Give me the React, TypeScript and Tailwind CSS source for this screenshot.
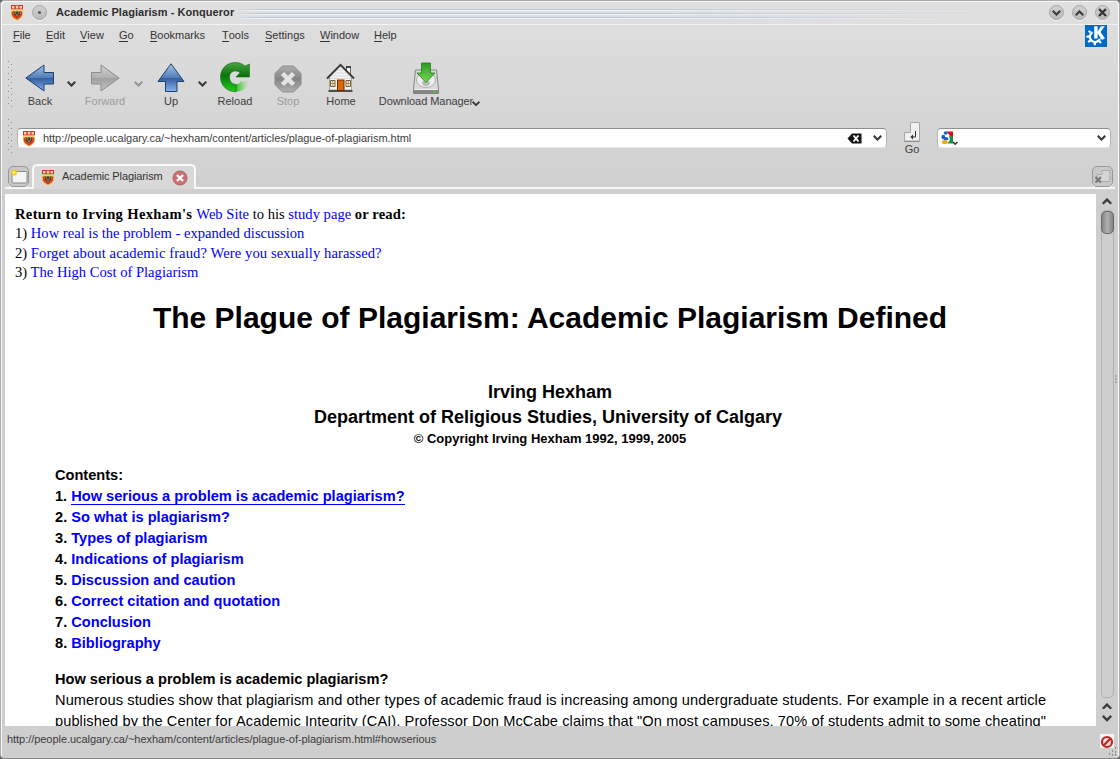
import React from "react";

function Crest({ className = "" }: { className?: string }) {
  return (
    <svg className={"shrink-0 " + className} width="14" height="17" viewBox="0 0 14 17">
      <path d="M1 1h12v8c0 4-2.500 6-6 7.500C3.500 15 1 13 1 9z" fill="#f3b93a" />
      <path d="M1 1h12v4.500H1z" fill="#cc2f30" />
      <path d="M2 2h2.500v2.500H2zM5.800 1.800h2.500v2.700H5.800zM9.500 2H12v2.500H9.500z" fill="#f5d69a" />
      <path d="M1 5.500h12v1.200H1z" fill="#efd9a0" />
      <path d="M1.800 7.500v2c0 2.800 2.200 4.600 5.200 5.900 3-1.300 5.200-3.100 5.200-5.900v-2l-1.300.5v1.500L7 13.500 3.100 9.500V8z" fill="#d8392b" />
      <path d="M3.300 7l1.900.8L7 7.200l1.800.6 1.900-.8-.5 3.500L7 13.200 3.800 10.500z" fill="#4a3d30" />
      <path d="M4.800 8.800l1.200.7M9.200 8.800L8 9.500M7 10v2" stroke="#e0b860" strokeWidth=".9" />
    </svg>
  );
}

function Chevron({ up, color = "#3b3b3b", className = "", size = 9 }: { up?: boolean; color?: string; className?: string; size?: number }) {
  return (
    <svg className={"shrink-0 " + className} width={size} height={(size * 6) / 9} viewBox="0 0 9 6">
      <path d={up ? "M.7 5.200L4.500 1.400 8.300 5.200" : "M.7.8L4.500 4.600 8.300.8"} fill="none" stroke={color} strokeWidth="2.100" />
    </svg>
  );
}

function WindowButton({ children, className = "" }: { children: React.ReactNode; className?: string }) {
  return (
    <span className={"flex size-[15px] shrink-0 items-center justify-center rounded-full border border-[#a5a5a5] bg-linear-to-b from-[#d2d2d2] to-[#bababa] shadow-[0_1px_0_#f5f5f5] " + className}>
      {children}
    </span>
  );
}

function Grip({ rows }: { rows: number }) {
  return (
    <svg width="5" height={rows * 6} className="shrink-0">
      {Array.from({ length: rows }, (_, i) => (
        <g key={i}>
          <rect x="0" y={i * 6} width="1" height="1" fill="#8f8f8f" />
          <rect x="3" y={i * 6 + 3} width="1" height="1" fill="#8f8f8f" />
        </g>
      ))}
    </svg>
  );
}

function ArrowIcon({ kind }: { kind: "back" | "forward" | "up" }) {
  const gray = kind === "forward";
  const id = "arrow-" + kind;
  return (
    <svg width="30" height="30" viewBox="0 0 30 30">
      <defs>
        <linearGradient id={id} gradientUnits="userSpaceOnUse" x1="15" y1="2" x2="15" y2="28">
          <stop offset="0" stopColor={gray ? "#d0d0d0" : "#a3c0e4"} />
          <stop offset=".5" stopColor={gray ? "#b0b0b0" : "#4f7cb8"} />
          <stop offset=".52" stopColor={gray ? "#a0a0a0" : "#355f9d"} />
          <stop offset="1" stopColor={gray ? "#c6c6c6" : "#83b0ee"} />
        </linearGradient>
      </defs>
      <g stroke={gray ? "#8c8c8c" : "#1d3f70"} strokeWidth="1" strokeLinejoin="round" fill={"url(#" + id + ")"}>
        {kind === "up" && <path d="M15 .8L28 18.500h-7V28.500H9.500V18.500H2z" />}
        {kind === "back" && <path d="M.8 15L19 2v7.500h9.500v11.500h-9.500v7z" />}
        {kind === "forward" && <path d="M29.200 15L11 2v7.500H1.500v11.500h9.500v7z" />}
      </g>
    </svg>
  );
}

function ReloadIcon() {
  return (
    <svg width="32" height="32" viewBox="0 0 32 32">
      <defs>
        <linearGradient id="reload" x1="0" y1="0" x2="0" y2="1">
          <stop offset="0" stopColor="#4ba33f" />
          <stop offset=".45" stopColor="#0b730b" />
          <stop offset="1" stopColor="#20d018" />
        </linearGradient>
        <linearGradient id="reload-tail" x1="0" y1="0" x2="1" y2="0">
          <stop offset=".1" stopColor="#28c51f" />
          <stop offset="1" stopColor="#c9dcc6" stopOpacity=".3" />
        </linearGradient>
      </defs>
      <path d="M16 30.800c7.500 0 13-4 14.300-10.300h-8.800c-1 2-2.500 3-5.500 3z" fill="url(#reload-tail)" />
      <path d="M17 30.800C8 30.800 1.500 24.500 1.500 16S8 1.500 16.500 1.500c4 0 7 1.200 9.300 3.500L30.500 3V16H17l4-4.200c-1.300-1.300-2.800-1.800-4.500-1.800-3.800 0-6 2.500-6 6.200 0 4 2.500 7 6.500 7.300z" fill="url(#reload)" stroke="#176a17" strokeWidth=".6" />
    </svg>
  );
}

function StopIcon() {
  return (
    <svg width="28" height="28" viewBox="0 0 28 28">
      <defs>
        <linearGradient id="stop" x1="0" y1="0" x2="0" y2="1">
          <stop offset="0" stopColor="#adadad" />
          <stop offset=".5" stopColor="#858585" />
          <stop offset="1" stopColor="#b0b0b0" />
        </linearGradient>
      </defs>
      <path d="M8.500 1h11L27 8.500v11L19.500 27h-11L1 19.500v-11z" fill="url(#stop)" stroke="#8a8a8a" />
      <path d="M8.500 8.500l11 11M19.500 8.500l-11 11" stroke="#e4e4e4" strokeWidth="4.500" />
    </svg>
  );
}

function HomeIcon() {
  return (
    <svg width="30" height="30" viewBox="0 0 30 30">
      <path d="M20.500 4h4v9h-4z" fill="#fff" stroke="#444" strokeWidth=".8" />
      <path d="M20 4h5" stroke="#222" strokeWidth="1.500" />
      <path d="M3.500 14L14.500 3l11 11v13h-22z" fill="#f5f5f5" stroke="#888" strokeWidth=".7" />
      <path d="M4 15.500h21M6 13h17M9 10h11M12 7h5" stroke="#cfcfcf" strokeWidth=".8" />
      <path d="M1 15.500L14.500 1.800 28 15.500" fill="none" stroke="#3a3a3a" strokeWidth="1.800" />
      <path d="M2.500 28h24" stroke="#505050" strokeWidth="2" />
      <rect x="11.500" y="17" width="6.500" height="10.500" fill="#d9690a" stroke="#6b2e05" />
      <path d="M4.500 17.500H9v6H4.500zM20 17.500h4.500v6H20z" fill="#f4eed2" stroke="#6d501d" strokeWidth=".9" />
      <path d="M4.500 20.500H9M20 20.500h4.500M6.800 17.500v6M22.300 17.500v6" stroke="#6d501d" strokeWidth=".5" />
    </svg>
  );
}

function DownloadIcon() {
  return (
    <svg width="28" height="33" viewBox="0 0 28 33" className="translate-y-[2px]">
      <defs>
        <linearGradient id="down" x1="0" y1="0" x2="0" y2="1">
          <stop offset="0" stopColor="#2d9a23" />
          <stop offset="1" stopColor="#77d957" />
        </linearGradient>
      </defs>
      <path d="M3.500 8h21l2 19v4.500h-25V27z" fill="#d9d9d9" stroke="#858585" />
      <path d="M2 27.500h24v4H2z" fill="#858585" />
      <path d="M2 27.500h24" stroke="#f3f3f3" />
      <ellipse cx="14" cy="18" rx="9.500" ry="7.500" fill="#ededed" stroke="#b0b0b0" />
      <ellipse cx="14" cy="21" rx="3.500" ry="2.500" fill="#bbb" stroke="#999" strokeWidth=".5" />
      <path d="M21 29.500h3" stroke="#56ce2a" strokeWidth="1.500" />
      <path d="M9.500 1h9v10H23L14 20.500 5 11h4.500z" fill="url(#down)" stroke="#237f1a" strokeWidth=".8" strokeLinejoin="round" />
    </svg>
  );
}

function KdeLogo() {
  return (
    <svg width="22" height="22" viewBox="0 0 22 22" className="shrink-0">
      <rect width="22" height="22" fill="#0068c6" />
      <path d="M7.500 7.300A5.200 5.200 0 1 0 14.800 14" fill="none" stroke="#fff" strokeWidth="2.200" />
      <path d="M5.500 7.500L3.700 5.700M4.300 11.700H1.300M5.400 15.300l-2.200 1.900M9.800 17v3.300M14 15.800l2 2.300M15.500 13l3 .8" stroke="#fff" strokeWidth="2.200" />
      <path d="M8.300 1v13h4.700V1z" fill="#0068c6" />
      <path d="M9.200 1.300h3.400v5.200l3.300-5.200h3.900l-4.300 5.800 4.600 6.500h-4l-3.500-5.200v5.200H9.200z" fill="#fff" />
    </svg>
  );
}

function Tool({ label, dim, className, children }: { label: string; dim?: boolean; className: string; children: React.ReactNode }) {
  return (
    <div className={"flex h-[52px] shrink-0 flex-col items-center " + className}>
      <div className="flex h-[38px] items-end justify-center pb-px">{children}</div>
      <div className={"text-[11px] leading-[14px] whitespace-nowrap " + (dim ? "text-[#9c9c9c]" : "text-[#3d3d3d]")}>{label}</div>
    </div>
  );
}

const menus = [
  { label: "File", width: "w-[33px]" },
  { label: "Edit", width: "w-[34px]" },
  { label: "View", width: "w-[39px]" },
  { label: "Go", width: "w-[31px]" },
  { label: "Bookmarks", width: "w-[72px]" },
  { label: "Tools", width: "w-[43px]" },
  { label: "Settings", width: "w-[55px]" },
  { label: "Window", width: "w-[54px]" },
  { label: "Help", width: "w-[40px]" },
];

const contents = [
  "So what is plagiarism?",
  "Types of plagiarism",
  "Indications of plagiarism",
  "Discussion and caution",
  "Correct citation and quotation",
  "Conclusion",
  "Bibliography",
];

function TitleBar() {
  return (
    <div className="flex h-[24px] items-center pt-px pr-[10px] pl-[10px]">
      <Crest />
      <WindowButton className="ml-2">
        <span className="size-[3px] rounded-full bg-[#555]" />
      </WindowButton>
      <div className="ml-[9px] w-[180px] text-[11px] font-bold tracking-[0.050px] whitespace-nowrap text-[#2e2e2e]">Academic Plagiarism - Konqueror</div>
      <div className="mt-[3px] mr-[38px] flex h-[11px] flex-1 flex-col gap-[2px] mask-r-from-50% mask-l-from-97%">
        <div className="h-[2px] border-t border-[#b3c8de] bg-[#f3f3f3]" />
        <div className="h-[2px] border-t border-[#b3c8de] bg-[#f3f3f3]" />
        <div className="h-[2px] border-t border-[#b3c8de] bg-[#f3f3f3]" />
      </div>
      <div className="flex gap-2">
        <WindowButton><Chevron /></WindowButton>
        <WindowButton><Chevron up /></WindowButton>
        <WindowButton>
          <svg width="9" height="9" viewBox="0 0 9 9"><path d="M1 1l7 7M8 1L1 8" stroke="#333" strokeWidth="2.300" /></svg>
        </WindowButton>
      </div>
    </div>
  );
}

function Toolbar() {
  return (
    <div className="flex h-[70px] items-start pt-[10px] pl-2">
      <div className="pt-[5px]"><Grip rows={8} /></div>
      <Tool label="Back" className="ml-[7px] w-[40px]"><ArrowIcon kind="back" /></Tool>
      <Chevron className="mt-[25px] ml-[7px]" />
      <Tool label="Forward" dim className="ml-[4px] w-[50px]"><ArrowIcon kind="forward" /></Tool>
      <Chevron className="mt-[25px] ml-[4px]" color="#949494" />
      <Tool label="Up" className="ml-[8px] w-[40px]"><ArrowIcon kind="up" /></Tool>
      <Chevron className="mt-[25px] ml-[7px]" />
      <Tool label="Reload" className="ml-[8px] w-[40px]"><ReloadIcon /></Tool>
      <Tool label="Stop" dim className="ml-[13px] w-[40px]"><StopIcon /></Tool>
      <Tool label="Home" className="ml-[13px] w-[40px]"><HomeIcon /></Tool>
      <Tool label="Download Manager" className="ml-[15px] w-[100px] tracking-[-0.060px]"><DownloadIcon /></Tool>
      <Chevron className="mt-[45px] -ml-[4px]" size={8} />
    </div>
  );
}

const field = "flex h-[20px] items-center rounded-[4px] border border-t-[#8f8f8f] border-x-[#b5b5b5] border-b-[#e8e8e8] bg-white";

function LocationBar() {
  return (
    <div className="flex h-[44px] items-start pl-2">
      <div className="pt-[3px]"><Grip rows={6} /></div>
      <div className={field + " mt-[12px] ml-1 w-[870px] pl-[4px]"}>
        <Crest />
        <span className="-mt-px ml-[7px] w-[804px] text-[11px] leading-4 tracking-[-0.040px] whitespace-nowrap text-[#3d3d3d]">http://people.ucalgary.ca/~hexham/content/articles/plague-of-plagiarism.html</span>
        <svg width="15" height="11" viewBox="0 0 15 11" className="shrink-0">
          <path d="M.5 5.500L5 .5h9.500v10H5z" fill="#151515" />
          <path d="M6.500 2.500l5 6M11.500 2.500l-5 6" stroke="#fff" strokeWidth="1.900" />
        </svg>
        <Chevron className="ml-[11px]" />
      </div>
      <div className="ml-[13px] flex w-6 flex-col items-center pt-[6px]">
        <svg width="16" height="20" viewBox="0 0 16 20">
          <path d="M6.500.5h9v18.500H.5v-8.500h6z" fill="#f1f1f1" stroke="#a7a7a7" />
          <path d="M.5 19.500h15" stroke="#8d8d8d" />
          <path d="M11.500 9v6H8" fill="none" stroke="#333" />
          <path d="M9 12.500v5L6.300 15z" fill="#333" />
        </svg>
        <span className="text-[11px] leading-[14px] text-[#3d3d3d]">Go</span>
      </div>
      <div className={field + " mt-[12px] ml-[13px] w-[174px] pl-[3px]"}>
        <svg width="17" height="16" viewBox="0 0 17 16" className="shrink-0">
          <path d="M5.500 1.500H12v6L9 6z" fill="#e00b18" />
          <path d="M8 5.500l4 1.500v6.500H6.500L9 10z" fill="#119347" />
          <ellipse cx="2.300" cy="7" rx="1.900" ry="2.300" fill="#1c5fc4" />
          <ellipse cx="4.700" cy="3" rx="2" ry="1.700" fill="#1c5fc4" />
          <ellipse cx="5" cy="8.700" rx="2.500" ry="1.600" fill="#1c5fc4" />
          <ellipse cx="3.800" cy="12" rx="3" ry="2" fill="#f0a818" />
          <path d="M12 12l2.200 2.200L16.400 12" fill="none" stroke="#333" strokeWidth="1.600" />
        </svg>
        <Chevron className="mr-[4px] ml-auto" />
      </div>
    </div>
  );
}

const tabButton = "flex size-[21px] items-center justify-center rounded-[5px] border border-[#979797] bg-[#c9c9c9] shadow-[0_1px_0_#f4f4f4]";

function TabBar() {
  return (
    <div className="mx-[5px] flex h-[29px] items-end">
      <div className="h-[24px] border-b-2 border-[#f8f8f8] px-[3px] pt-px">
        <div className={tabButton}>
          <svg width="18" height="15" viewBox="0 0 18 15">
            <rect x="2" y="2.500" width="15" height="11.500" rx="1" fill="#f5f5f5" stroke="#8a8a8a" />
            <circle cx="4" cy="3.500" r="3" fill="#f4c81c" />
            <circle cx="4" cy="3.500" r="1.300" fill="#fff3a0" />
          </svg>
        </div>
      </div>
      <div className="flex h-[25px] w-[164px] items-center rounded-t-[5px] border-x-2 border-t-2 border-[#f8f8f8] bg-[#d8d8d8] pl-[7px]">
        <Crest className="-mt-px" />
        <span className="-mt-[3px] ml-[7px] w-[110px] text-[11px] leading-4 tracking-[-0.110px] whitespace-nowrap text-[#333]">Academic Plagiarism</span>
        <svg width="16" height="16" viewBox="0 0 16 16" className="shrink-0">
          <circle cx="8" cy="8" r="7" fill="#cf7070" stroke="#a96161" />
          <path d="M5 5l6 6M11 5l-6 6" stroke="#fff" strokeWidth="2.400" />
        </svg>
      </div>
      <div className="flex h-[24px] flex-1 justify-end border-b-2 border-[#f8f8f8] pt-px pr-[2px]">
        <div className={tabButton}>
          <svg width="17" height="15" viewBox="0 0 17 15">
            <path d="M8 1.500h8v11H3v-7h5z" fill="#d6d6d6" stroke="#aaa" />
            <path d="M1.500 8l5.500 5.500M7 8l-5.500 5.500" stroke="#777" strokeWidth="2.200" />
          </svg>
        </div>
      </div>
    </div>
  );
}

function Article() {
  return (
    <main className="w-[1091px] overflow-hidden bg-white px-[10px] pt-[11px] text-black">
      <div className="font-['Liberation_Serif',serif] text-[14.6px] leading-[19.3px] whitespace-nowrap">
        <div><b className="tracking-[0.330px]">Return to Irving Hexham's </b><a className="text-[#0000ff]">Web Site</a> to his <a className="text-[#0000ff]">study page</a> <b className="tracking-[0.120px]">or read:</b></div>
        <div>1) <a className="text-[#0000ff]">How real is the problem - expanded discussion</a></div>
        <div>2) <a className="tracking-[0.095px] text-[#0000ff]">Forget about academic fraud? Were you sexually harassed?</a></div>
        <div>3) <a className="text-[#0000ff]">The High Cost of Plagiarism</a></div>
      </div>
      <h1 className="mt-[16px] pr-px text-center text-[30px] leading-[40px] font-bold whitespace-nowrap">The Plague of Plagiarism: Academic Plagiarism Defined</h1>
      <div className="mt-[42px] pr-px text-center font-bold whitespace-nowrap">
        <div className="text-[18px] leading-[25px]">Irving Hexham</div>
        <div className="pr-1 text-[18px] leading-[25px]">Department of Religious Studies, University of Calgary</div>
        <div className="text-[13px] leading-[18px]">© Copyright Irving Hexham 1992, 1999, 2005</div>
      </div>
      <div className="mt-[17px] pl-10 text-[14.6px] leading-[21px] font-bold whitespace-nowrap">
        <div>Contents:</div>
        <div>1. <a className="border-b border-[#0000ff] text-[#0000ff]">How serious a problem is academic plagiarism?</a></div>
        {contents.map((text, i) => (
          <div key={text}>{i + 2}. <a className="tracking-[0.020px] text-[#0000ff]">{text}</a></div>
        ))}
      </div>
      <div className="mt-[15px] pl-10 text-[14.6px] leading-[21px] whitespace-nowrap">
        <b>How serious a problem is academic plagiarism?</b>
        <div className="tracking-[0.104px]">Numerous studies show that plagiarism and other types of academic fraud is increasing among undergraduate students. For example in a recent article</div>
        <div className="tracking-[0.090px]">published by the Center for Academic Integrity (CAI), Professor Don McCabe claims that "On most campuses, 70% of students admit to some cheating"</div>
      </div>
    </main>
  );
}

function ScrollBar() {
  return (
    <div className="flex flex-1 flex-col items-center pt-[4px] pb-[4px] pl-[2px]">
      <Chevron up size={10} />
      <div className="mt-[5px] flex w-[13px] flex-1 flex-col rounded-[5px] border border-[#b2b2b2] bg-[#cecece]">
        <div className="-mx-px h-[23px] rounded-[5px] border border-[#686868] bg-linear-to-r from-[#858585] via-[#b0b0b0] to-[#858585]" />
      </div>
      <Chevron up size={10} className="mt-[5px]" />
      <Chevron size={10} className="mt-[6px]" />
    </div>
  );
}

export default function App() {
  return (
    <div className="h-[759px] w-[1120px] overflow-hidden bg-[#666] font-['Liberation_Sans',Arial,sans-serif]">
      <div className="relative flex h-[759px] flex-col overflow-hidden rounded-[5px] bg-linear-to-b from-[#e0e0e0] to-[#cecece] to-[210px]">
        <TitleBar />
        <div className="flex h-[22px] shrink-0 justify-between border-t border-[#f3f3f3] pr-[13px] pl-[13px]">
          <nav className="flex pt-[2px] text-[11px] leading-4 text-[#333]">
            {menus.map((m) => (
              <span key={m.label} className={m.width}>
                <span className="inline-block h-[15px] border-b border-[#333]">{m.label[0]}</span>{m.label.slice(1)}
              </span>
            ))}
          </nav>
          <KdeLogo />
        </div>
        <Toolbar />
        <LocationBar />
        <TabBar />
        <div className="flex h-[537px] pt-[5px] pr-[4px] pl-[5px]">
          <Article />
          <ScrollBar />
        </div>
        <footer className="flex h-[33px] items-center justify-between pr-[6px] pb-[6px] pl-[7px] text-[11px] text-[#3b3b3b]">
          <span className="tracking-[-0.045px]">http://people.ucalgary.ca/~hexham/content/articles/plague-of-plagiarism.html#howserious</span>
          <svg width="14" height="16" viewBox="0 0 14 16" className="mt-[3px]">
            <rect width="14" height="14" y="1" fill="#f4f4f4" />
            <circle cx="7" cy="9" r="5" fill="#f3dddd" stroke="#bd2723" strokeWidth="2.200" />
            <path d="M3.500 12.500l7-7" stroke="#bd2723" strokeWidth="2.200" />
          </svg>
        </footer>
        <div className="pointer-events-none absolute inset-0 rounded-[5px] border border-[#ababab] border-b-[#858585] shadow-[inset_1px_1px_0_#fafafa,inset_-1px_0_0_#fafafa]" />
        <svg className="absolute top-[375px] left-[1115px]" width="2" height="8">
          <path d="M0 1h2M0 4h2M0 7h2" stroke="#8a8a8a" />
        </svg>
        <svg className="absolute top-[747px] left-[1109px]" width="9" height="10">
          <path d="M6 1h1M3 4h1M6 5h1M0 7h1M3 8h1M6 8h1" stroke="#777" strokeWidth="1.500" />
        </svg>
      </div>
    </div>
  );
}
